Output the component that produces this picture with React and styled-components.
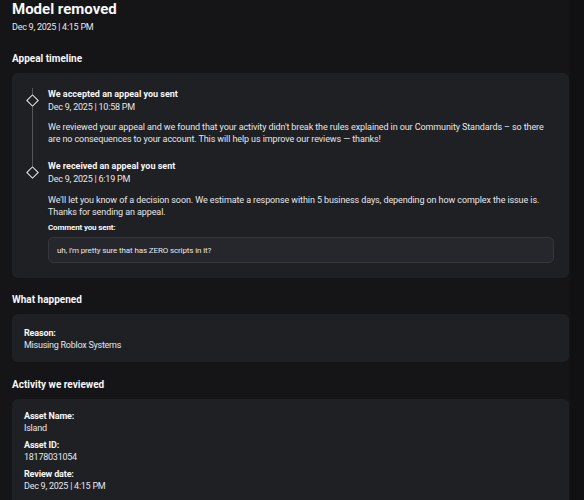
import React from 'react';
import styled, { createGlobalStyle } from 'styled-components';

/* page wide defaults */
const GlobalStyle = createGlobalStyle`
  body {
    margin: 0;
    background: #111113;
    font-family: Roboto, "Liberation Sans", sans-serif;
    color: #e6e6e9;
  }
`;

const Page = styled.div`
  width: 570px;
  min-height: 500px;
  box-sizing: border-box;
  background: #151518;
  padding: 0 0 0 12px;
`;

const Title = styled.h1`
  margin: 0;
  font-size: 15px;
  line-height: 18px;
  font-weight: 700;
  color: #f7f7f8;
`;

const SubDate = styled.div`
  margin-top: 2px;
  font-size: 9px;
  line-height: 14px;
  letter-spacing: -0.25px;
`;

const Section = styled.section`
  margin-top: ${(p) => p.$top}px;
`;

const SectionTitle = styled.h2`
  margin: 0 0 6px;
  font-size: 10px;
  line-height: 16px;
  font-weight: 700;
  color: #f7f7f8;
`;

const Card = styled.div`
  width: 557px;
  box-sizing: border-box;
  background: #1f2024;
  border-radius: 6px;
  padding: ${(p) => p.$pad};
`;

const Timeline = styled.div`
  display: flex;
  flex-direction: column;
`;

const Event = styled.div`
  display: grid;
  grid-template-columns: 16px 1fr;
  column-gap: 8px;
  padding-bottom: ${(p) => (p.$last ? 0 : 15)}px;
`;

/* the rail runs on through the gap under each event */
const Rail = styled.div`
  display: flex;
  flex-direction: column;
  align-items: center;
  margin-bottom: ${(p) => (p.$last ? 0 : -15)}px;
`;

const RailLine = styled.div`
  width: 1px;
  background: ${(p) => (p.$hidden ? 'transparent' : '#55565c')};
  height: ${(p) => (p.$grow ? 'auto' : `${p.$h}px`)};
  flex: ${(p) => (p.$grow ? 1 : 'none')};
`;

const Diamond = styled.div`
  width: 7px;
  height: 7px;
  margin: 2px 0;
  border: 1.3px solid #f2f2f3;
  transform: rotate(45deg);
  flex: none;
`;

const EventBody = styled.div`
  min-width: 0;
`;

const EventTitle = styled.div`
  font-size: 9px;
  font-weight: 700;
  line-height: 13px;
  color: #f7f7f8;
`;

const EventDate = styled.div`
  font-size: 9px;
  line-height: 13px;
  letter-spacing: -0.22px;
`;

const Paragraph = styled.p`
  margin: ${(p) => p.$top}px 0 0;
  font-size: 9px;
  line-height: 12px;
  letter-spacing: -0.1px;
`;

const CommentLabel = styled.div`
  margin-top: 4px;
  font-size: 8px;
  line-height: 12px;
  font-weight: 700;
  letter-spacing: -0.15px;
  color: #f7f7f8;
`;

const CommentBox = styled.div`
  margin-top: 3px;
  height: 26px;
  box-sizing: border-box;
  display: flex;
  align-items: center;
  padding: 0 8px;
  background: #25272c;
  border: 1px solid #35373c;
  border-radius: 5px;
  font-size: 8px;
  letter-spacing: -0.12px;
`;

const Field = styled.div`
  & + & {
    margin-top: 6px;
  }
`;

const FieldLabel = styled.div`
  font-size: 9px;
  line-height: 11px;
  font-weight: 700;
  letter-spacing: -0.15px;
  color: #f7f7f8;
`;

const FieldValue = styled.div`
  font-size: 9px;
  line-height: 12px;
  letter-spacing: -0.25px;
`;

const events = [
  {
    title: 'We accepted an appeal you sent',
    date: 'Dec 9, 2025 | 10:58 PM',
    text: "We reviewed your appeal and we found that your activity didn't break the rules explained in our Community Standards – so there are no consequences to your account. This will help us improve our reviews — thanks!",
  },
  {
    title: 'We received an appeal you sent',
    date: 'Dec 9, 2025 | 6:19 PM',
    text: "We'll let you know of a decision soon. We estimate a response within 5 business days, depending on how complex the issue is. Thanks for sending an appeal.",
    comment: "uh, i'm pretty sure that has ZERO scripts in it?",
  },
];

const activity = [
  ['Asset Name:', 'Island'],
  ['Asset ID:', '18178031054'],
  ['Review date:', 'Dec 9, 2025 | 4:15 PM'],
];

function TimelineEvent({ event, first, last }) {
  return (
    <Event $last={last}>
      <Rail $last={last}>
        <RailLine $h={6} />
        <Diamond />
        <RailLine $grow $hidden={last} />
      </Rail>
      <EventBody>
        <EventTitle>{event.title}</EventTitle>
        <EventDate>{event.date}</EventDate>
        <Paragraph $top={first ? 7 : 8}>{event.text}</Paragraph>
        {event.comment && (
          <>
            <CommentLabel>Comment you sent:</CommentLabel>
            <CommentBox>{event.comment}</CommentBox>
          </>
        )}
      </EventBody>
    </Event>
  );
}

export default function App() {
  return (
    <Page>
      <GlobalStyle />
      <Title>Model removed</Title>
      <SubDate>Dec 9, 2025 | 4:15 PM</SubDate>

      <Section $top={17}>
        <SectionTitle>Appeal timeline</SectionTitle>
        <Card $pad="15px 15px 15px 12px">
          <Timeline>
            {events.map((e, i) => (
              <TimelineEvent key={i} event={e} first={i === 0} last={i === events.length - 1} />
            ))}
          </Timeline>
        </Card>
      </Section>

      <Section $top={14}>
        <SectionTitle>What happened</SectionTitle>
        <Card $pad="14px 12px 11px">
          <Field>
            <FieldLabel>Reason:</FieldLabel>
            <FieldValue>Misusing Roblox Systems</FieldValue>
          </Field>
        </Card>
      </Section>

      <Section $top={15}>
        <SectionTitle>Activity we reviewed</SectionTitle>
        <Card $pad="12px 12px 20px">
          {activity.map(([label, value]) => (
            <Field key={label}>
              <FieldLabel>{label}</FieldLabel>
              <FieldValue>{value}</FieldValue>
            </Field>
          ))}
        </Card>
      </Section>
    </Page>
  );
}
